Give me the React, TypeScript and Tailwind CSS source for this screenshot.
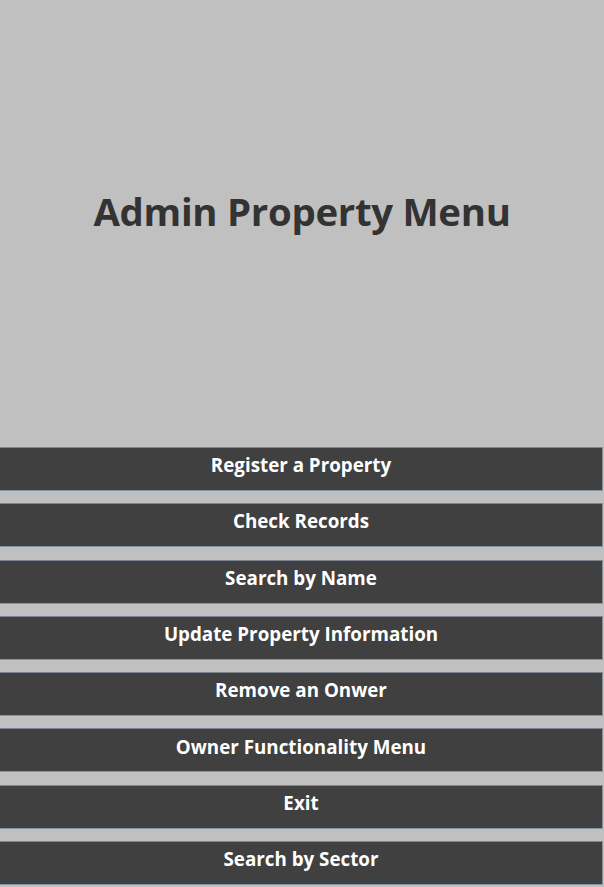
const items = [
  'Register a Property',
  'Check Records',
  'Search by Name',
  'Update Property Information',
  'Remove an Onwer',
  'Owner Functionality Menu',
  'Exit',
  'Search by Sector',
]

function App() {
  return (
    <main className="w-[604px] h-[887px] bg-[#c0c0c0] overflow-hidden" style={{ fontFamily: '"Open Sans", sans-serif' }}>
      <div className="h-[447px] flex items-center justify-center pb-[24px]">
        <h1 className="text-[38.4px] font-bold text-[#333333] tracking-[-0.3px]">Admin Property Menu</h1>
      </div>
      <div className="flex flex-col gap-[12.3px]">
        {items.map((label) => (
          <button
            key={label}
            className="h-[44px] w-[603px] shrink-0 bg-[#404040] border-t border-b border-r border-t-[#7d8590] border-b-[#8596a3] border-r-[#8a929a] text-white font-bold text-[18.8px] leading-none pb-[7px]"
          >
            {label}
          </button>
        ))}
      </div>
    </main>
  )
}

export default App
